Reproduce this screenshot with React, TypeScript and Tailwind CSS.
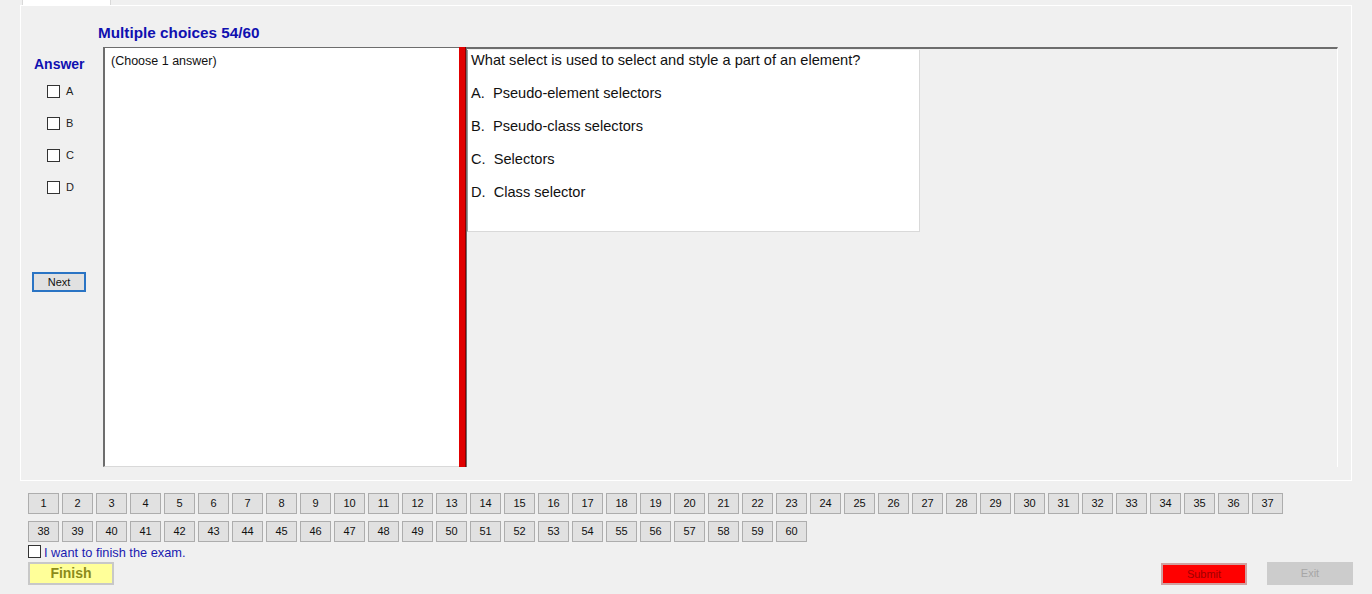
import React from "react";

const font = { fontFamily: '"Liberation Sans", Arial, sans-serif' };

const NumButton = ({ n }: { n: number }) => (
  <div className="w-[31px] h-[21px] shrink-0 border border-[#adadad] bg-[#e1e1e1] flex items-center justify-center text-[11px] text-[#111]">
    {n}
  </div>
);

const Check = ({ label }: { label: string }) => (
  <div className="flex items-center h-[13px]">
    <div className="w-[13px] h-[13px] border border-[#333] bg-white" />
    <span className="ml-[6px] text-[11px] text-[#222]">{label}</span>
  </div>
);

const App = () => {
  const row1 = Array.from({ length: 37 }, (_, i) => i + 1);
  const row2 = Array.from({ length: 23 }, (_, i) => i + 38);
  const options = [
    "A.  Pseudo-element selectors",
    "B.  Pseudo-class selectors",
    "C.  Selectors",
    "D.  Class selector",
  ];

  return (
    <div className="w-[1372px] h-[594px] bg-[#f0f0f0] overflow-hidden" style={font}>
      {/* tab strip */}
      <div className="h-[5px] flex">
        <div className="ml-[22px] w-[89px] h-[5px] bg-white border-x border-[#d9d9d9]" />
      </div>

      {/* tab page */}
      <div className="ml-[20px] w-[1332px] h-[476px] border border-white bg-[#f0f0f0]">
        <div className="pl-[77px] pt-[16px] h-[41px] text-[15.3px] font-bold text-[#1010b0]">
          Multiple choices 54/60
        </div>

        <div className="flex h-[420px]">
          {/* answer column */}
          <div className="w-[82px] shrink-0 flex flex-col">
            <div className="pl-[13px] pt-[7px] text-[14px] font-bold text-[#1010b0]">Answer</div>
            <div className="pl-[26px] pt-[10px] flex flex-col gap-[19px]">
              <Check label="A" />
              <Check label="B" />
              <Check label="C" />
              <Check label="D" />
            </div>
            <div className="pl-[11px] pt-[78px]">
              <div className="w-[54px] h-[20px] border-2 border-[#2a74c4] bg-[#e1e1e1] flex items-center justify-center text-[11px] text-[#111]">
                Next
              </div>
            </div>
          </div>

          {/* left text box */}
          <div className="w-[356px] shrink-0 bg-white border-l-2 border-t border-[#6d6d6d] border-b border-b-[#d9d9d9]">
            <div className="pl-[6px] pt-[4px] text-[12.5px] text-[#111]">(Choose 1 answer)</div>
          </div>

          {/* splitter */}
          <div className="w-[7px] shrink-0 bg-[#e00000] border-r border-[#8a0000]" />

          {/* question area */}
          <div className="w-[872px] shrink-0 border-t-2 border-l border-[#6d6d6d] border-r border-r-white bg-[#f0f0f0] pt-[1px]">
            <div className="w-[453px] h-[182px] bg-white border-l border-[#9a9a9a] border-b border-b-[#d9d9d9] border-r border-r-[#d9d9d9] pl-[3px] text-[14.6px] text-[#111]">
              <div className="pt-[2px] leading-[17px]">What select is used to select and style a part of an element?</div>
              {options.map((o) => (
                <div key={o} className="mt-[16px] leading-[17px] whitespace-pre">
                  {o}
                </div>
              ))}
            </div>
          </div>
        </div>
      </div>

      {/* question navigator */}
      <div className="pl-[28px] pt-[12px] flex flex-col gap-[7px]">
        <div className="flex gap-[3px]">
          {row1.map((n) => (
            <NumButton key={n} n={n} />
          ))}
        </div>
        <div className="flex gap-[3px]">
          {row2.map((n) => (
            <NumButton key={n} n={n} />
          ))}
        </div>
      </div>

      <div className="pl-[28px] pt-[3px] flex items-center h-[16px]">
        <div className="w-[13px] h-[13px] border border-[#333] bg-white" />
        <span className="ml-[3px] mt-[2px] text-[12.8px] text-[#1a1ab0]">I want to finish the exam.</span>
      </div>

      <div className="flex items-start pt-[4px]">
        <div className="ml-[28px] w-[86px] h-[23px] border-2 border-[#c8c8c8] bg-[#ffff99] flex items-center justify-center text-[14px] font-bold text-[#8b8b1a]">
          Finish
        </div>
        <div className="ml-auto mt-[1px] w-[86px] h-[22px] border-2 border-[#d0a0a0] bg-[#ff0000] flex items-center justify-center text-[11px] text-[#a00000]">
          Submit
        </div>
        <div className="ml-[20px] mr-[19px] w-[86px] h-[23px] bg-[#cccccc] flex items-center justify-center text-[11px] text-[#a6a6a6]">
          Exit
        </div>
      </div>
    </div>
  );
};

export default App;
